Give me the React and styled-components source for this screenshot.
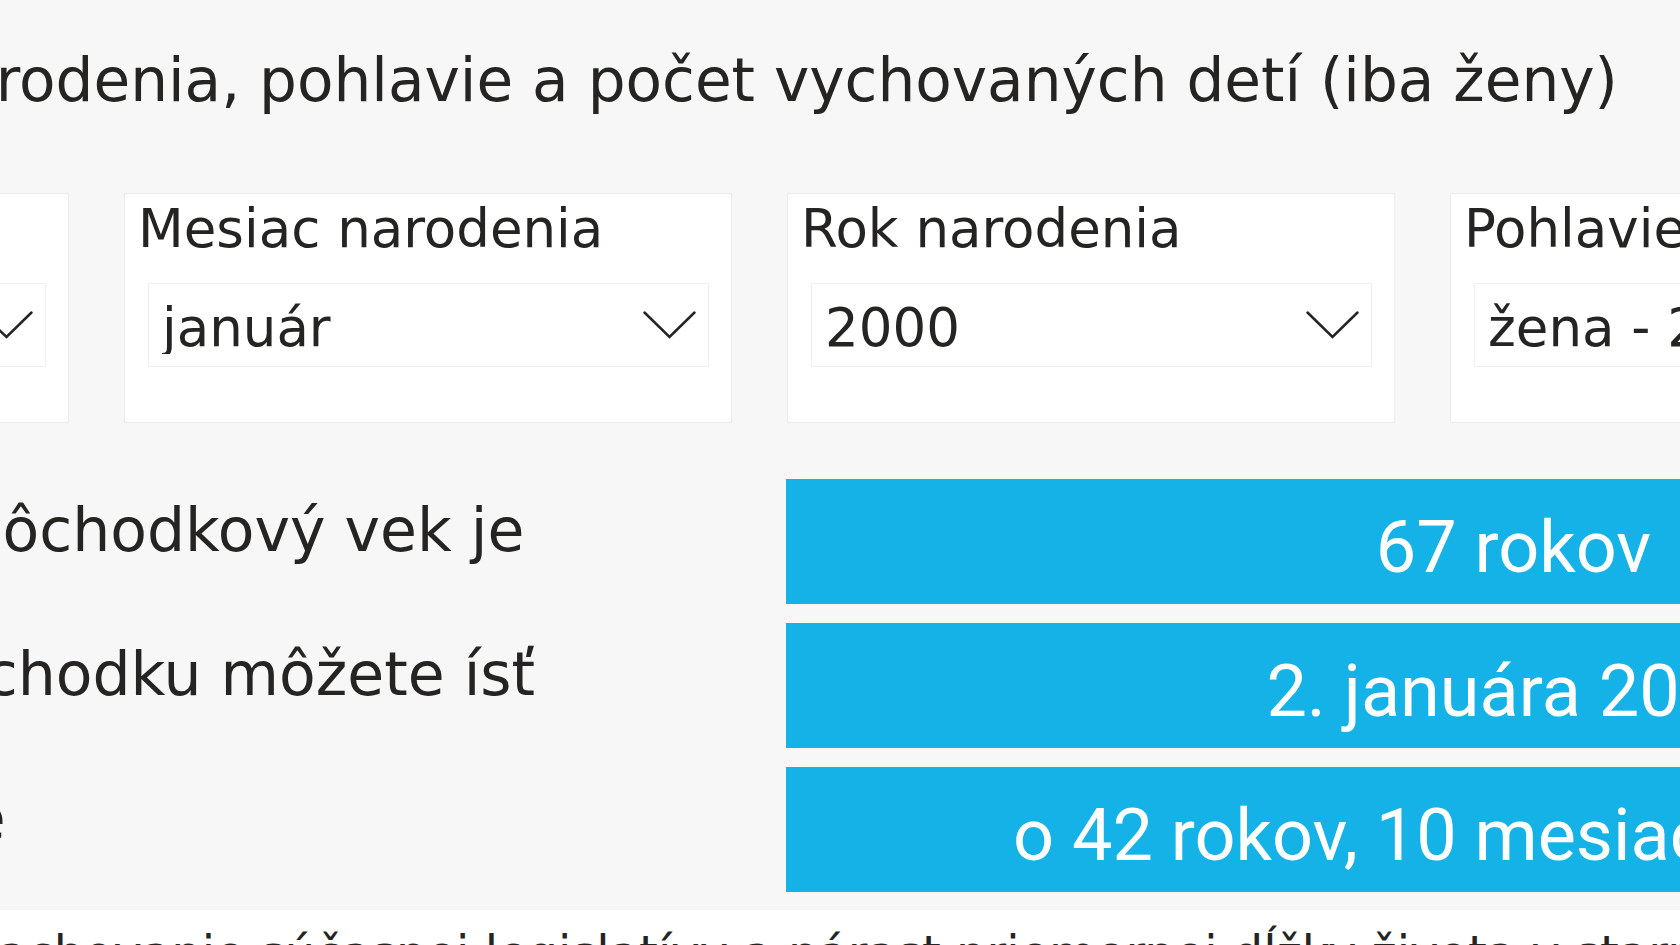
import React from "react";
import styled, { createGlobalStyle } from "styled-components";

const GlobalStyle = createGlobalStyle`
  html, body {
    margin: 0;
    padding: 0;
    background: #f7f7f7;
  }
  body {
    overflow: hidden;
  }
`;

const Viewport = styled.div`
  width: 1680px;
  height: 945px;
  overflow: hidden;
  background: #f7f7f7;
  display: flex;
  flex-direction: column;
  font-family: "DejaVu Sans", Verdana, sans-serif;
  color: #252423;
`;

const Report = styled.div`
  flex: none;
  width: 3300px;
  margin-left: -539px;
  padding-top: 51px;
  display: flex;
  flex-direction: column;
`;

const Title = styled.h1`
  margin: 0;
  font-size: 59.7px;
  font-weight: normal;
  line-height: 60px;
  white-space: nowrap;
`;

const FilterRow = styled.div`
  display: flex;
  gap: 55px;
  margin-top: 82px;
`;

const Card = styled.div`
  flex: none;
  box-sizing: border-box;
  width: 608px;
  height: 230px;
  background: #ffffff;
  border: 1px solid #ebebeb;
  padding: 8px 22px 0 13px;
  display: flex;
  flex-direction: column;
`;

const CardLabel = styled.div`
  font-size: 53px;
  line-height: 1;
  white-space: nowrap;
`;

const Dropdown = styled.div`
  box-sizing: border-box;
  height: 84px;
  margin: 28px 0 0 10px;
  border: 1px solid #efefef;
  background: #ffffff;
  padding: 0 12px 0 13px;
  display: flex;
  align-items: center;
  justify-content: space-between;
  gap: 12px;
`;

const DropdownValue = styled.span`
  font-size: 53px;
  line-height: 1;
  padding-top: 4px;
  white-space: nowrap;
  overflow: hidden;
`;

const Chevron = styled.svg`
  flex: none;
  width: 53px;
  height: 28px;
`;

const Results = styled.div`
  display: flex;
  flex-direction: column;
  gap: 19px;
  margin-top: 56px;
`;

const ResultRow = styled.div`
  display: flex;
  height: 125px;
`;

const ResultLabel = styled.div`
  flex: none;
  box-sizing: border-box;
  width: 1325px;
  padding-top: 21px;
  font-size: 60px;
  line-height: 1;
  white-space: nowrap;
  text-indent: ${(p) => p.$indent}px;
`;

const ResultValue = styled.div`
  flex: none;
  box-sizing: border-box;
  width: 1455px;
  background: #14b2e6;
  color: #ffffff;
  font-family: Roboto, "Open Sans", sans-serif;
  font-size: 72px;
  line-height: 1;
  padding-top: 12px;
  display: flex;
  align-items: center;
  justify-content: center;
  white-space: nowrap;
`;

const Footer = styled.footer`
  flex: 1;
  margin-top: 18px;
  background: #ffffff;
  padding-top: 19px;
  font-size: 48px;
  line-height: 1;
  white-space: nowrap;
  text-indent: -35px;
  overflow: hidden;
`;

const filters = [
  { label: "Deň narodenia", value: "1" },
  { label: "Mesiac narodenia", value: "január" },
  { label: "Rok narodenia", value: "2000" },
  { label: "Pohlavie", value: "žena - 2 deti" },
  { label: "Počet vychovaných detí", value: "2" },
];

const results = [
  { label: "Váš dôchodkový vek je", value: "67 rokov", indent: 380 },
  { label: "Do dôchodku môžete ísť", value: "2. januára 2067", indent: 347 },
  { label: "Na dôchodok pôjdete", value: "o 42 rokov, 10 mesiacov a 2 dni", indent: -94 },
];

function ChevronIcon() {
  return (
    <Chevron viewBox="0 0 53 28" aria-hidden="true">
      <polyline
        points="1.5,1.5 26.5,26 51.5,1.5"
        fill="none"
        stroke="#252423"
        strokeWidth="2.5"
        strokeLinecap="round"
        strokeLinejoin="miter"
      />
    </Chevron>
  );
}

export default function App() {
  return (
    <>
      <GlobalStyle />
      <Viewport>
        <Report>
          <Title>
            Zadajte dátum narodenia, pohlavie a počet vychovaných detí (iba ženy)
          </Title>
          <FilterRow>
            {filters.map((f) => (
              <Card key={f.label}>
                <CardLabel>{f.label}</CardLabel>
                <Dropdown>
                  <DropdownValue>{f.value}</DropdownValue>
                  <ChevronIcon />
                </Dropdown>
              </Card>
            ))}
          </FilterRow>
          <Results>
            {results.map((r) => (
              <ResultRow key={r.label}>
                <ResultLabel $indent={r.indent}>{r.label}</ResultLabel>
                <ResultValue>{r.value}</ResultValue>
              </ResultRow>
            ))}
          </Results>
        </Report>
        <Footer>
          Zachovanie súčasnej legislatívy a nárast priemernej dĺžky života v starnúcej populácii.
        </Footer>
      </Viewport>
    </>
  );
}
